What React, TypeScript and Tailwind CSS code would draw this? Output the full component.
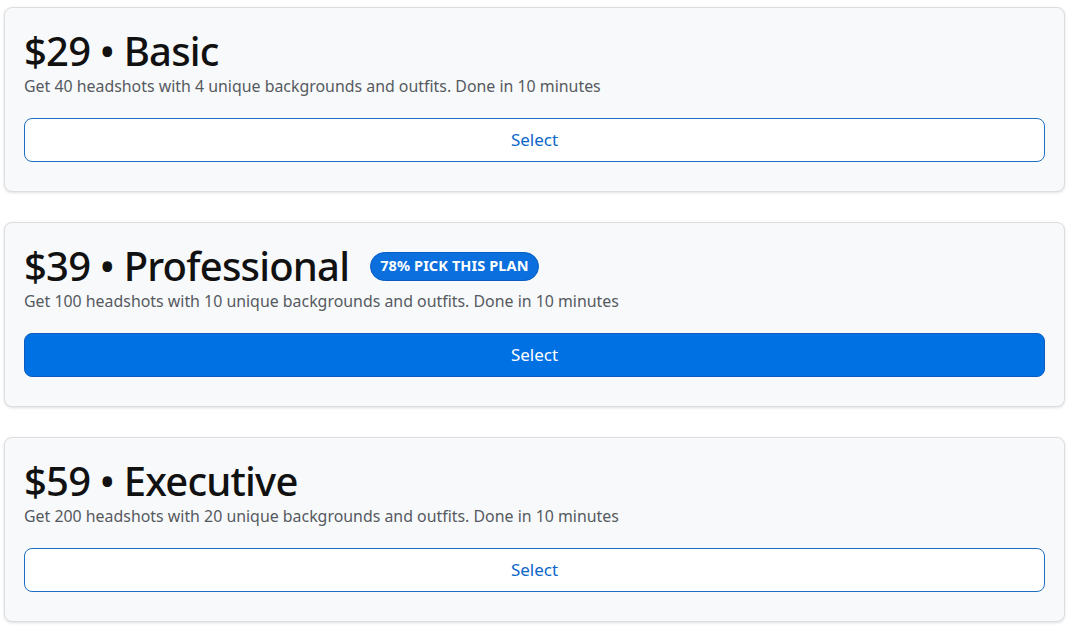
import React from "react";

type Plan = {
  price: string;
  name: string;
  desc: string;
  featured?: boolean;
};

const plans: Plan[] = [
  { price: "$29", name: "Basic", desc: "Get 40 headshots with 4 unique backgrounds and outfits. Done in 10 minutes" },
  { price: "$39", name: "Professional", desc: "Get 100 headshots with 10 unique backgrounds and outfits. Done in 10 minutes", featured: true },
  { price: "$59", name: "Executive", desc: "Get 200 headshots with 20 unique backgrounds and outfits. Done in 10 minutes" },
];

export default function App() {
  return (
    <div
      className="min-h-[628px] w-[1070px] bg-white pl-[4px] pr-[5px] pt-[7px] flex flex-col gap-[30px]"
      style={{ fontFamily: '"Noto Sans", "Open Sans", Arial, sans-serif' }}
    >
      {plans.map((p) => (
        <div
          key={p.name}
          className="rounded-[8px] border border-[#dcdde0] bg-[#f8f9fb] px-[19px] pt-[19px] pb-[29px] shadow-[0_1px_3px_rgba(0,0,0,0.12)]"
        >
          <div className="flex items-center gap-[21px]">
            <h2 className="text-[40px] leading-[48px] font-medium text-[#111] tracking-[-0.8px]">
              {p.price} • {p.name}
            </h2>
            {p.featured && (
              <span className="rounded-full border border-[#0a5cc0] bg-[#0b6fde] px-[9px] h-[29px] flex items-center text-[14.5px] font-bold text-white tracking-[0.1px]">
                78% PICK THIS PLAN
              </span>
            )}
          </div>
          <p className="text-[15.9px] leading-[23px] text-[#555a60]">{p.desc}</p>
          <button
            className={
              p.featured
                ? "mt-[20px] h-[44px] w-full rounded-[8px] border border-[#0a5cc0] bg-[#0071e3] text-[17px] text-white"
                : "mt-[20px] h-[44px] w-full rounded-[8px] border border-[#1d6fc4] bg-white text-[17px] text-[#0b67c8]"
            }
          >
            Select
          </button>
        </div>
      ))}
    </div>
  );
}
